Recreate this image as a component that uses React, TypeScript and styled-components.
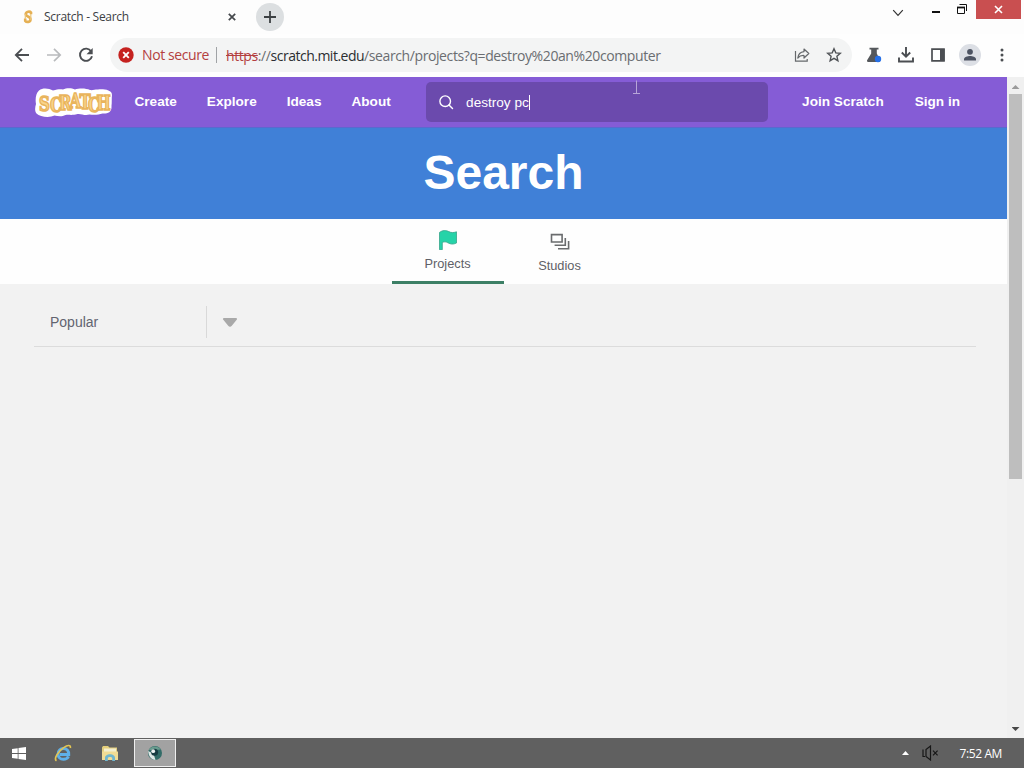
import type { ReactNode } from "react";
import styled, { createGlobalStyle } from "styled-components";

const App = () => {
  return (
    <>
      <GlobalStyle />
      <StyledScreen>
        <TabStrip />
        <Toolbar />
        <StyledViewport>
          <StyledPage>
            <SiteNav />
            <StyledBanner>
              <h1>Search</h1>
            </StyledBanner>
            <StyledTabs>
              <PageTab label="Projects" active>
                <svg width="20" height="20" viewBox="0 0 20 20">
                  <path
                    d="M1.500 2.400C5-.1 8 .2 10.800 1.600c2.500 1.300 4.800 1.200 7.700.2v11.200c-3.400 1.700-6 1.200-8.600-.2-2.300-1.300-3.500-1.100-5.600-.4v7.300H1.500z"
                    fill="#25d3a8"
                    stroke="#36a58a"
                    strokeWidth="0.8"
                    strokeLinejoin="round"
                  />
                </svg>
              </PageTab>
              <PageTab label="Studios">
                <svg width="20" height="20" viewBox="0 0 20 20" fill="none" stroke="#6a6c6e" strokeWidth="1.600">
                  <path d="M1.500 2.600h10.600v7.400H1.500z" />
                  <path d="M15.300 5.900v7.400H4.600M18.600 9.100v7.600H8" />
                </svg>
              </PageTab>
            </StyledTabs>
            <StyledFilter>
              <span>Popular</span>
              <StyledCaret>
                <svg width="16" height="11" viewBox="0 0 16 11">
                  <path d="M2 1h12c1 0 1.400 1 .7 1.800L9.800 8.800c-1 1.200-2.600 1.200-3.600 0L1.300 2.800C.6 2 1 1 2 1z" fill="#a9a9a9" />
                </svg>
              </StyledCaret>
            </StyledFilter>
          </StyledPage>
          <StyledScrollbar>
            <StyledArrow up />
            <StyledThumb />
            <StyledArrow />
          </StyledScrollbar>
        </StyledViewport>
        <Taskbar />
        <StyledPointer width="9" height="14" viewBox="0 0 9 14">
          <path d="M4.500.5v13M1 13.500h7" stroke="#b7a5d8" fill="none" />
        </StyledPointer>
      </StyledScreen>
    </>
  );
};
export default App;

const TabStrip = () => (
  <StyledTabStrip>
    <StyledBrowserTab>
      <svg width="10" height="14" viewBox="0 0 10 14">
        <path
          d="M8 4.300V2.500c-1-1.400-5-1.200-5.300 1.500C2.500 7 7.600 6 7.500 9.500c0 2.800-4 3-5.300 1.400V8.500"
          fill="none"
          stroke="#e5b054"
          strokeWidth="2.600"
        />
        <path d="M7.800 4v6M2.300 9V4" fill="none" stroke="#ecc67c" strokeWidth="1.200" />
      </svg>
      <StyledTabTitle>Scratch - Search</StyledTabTitle>
      <svg width="8" height="8" viewBox="0 0 8 8">
        <path d="M.8.8l6.400 6.400M7.200.8L.8 7.200" stroke="#45484c" strokeWidth="1.700" />
      </svg>
    </StyledBrowserTab>
    <StyledNewTab>
      <svg width="12" height="12" viewBox="0 0 12 12">
        <path d="M6 0v12M0 6h12" stroke="#3c4043" strokeWidth="1.800" />
      </svg>
    </StyledNewTab>
    <StyledWindowButtons>
      <StyledWindowButton w={32} pt={9}>
        <svg width="12" height="8" viewBox="0 0 12 8">
          <path d="M1.200 1.200L6 6.300l4.800-5.100" fill="none" stroke="#333" strokeWidth="1.200" />
        </svg>
      </StyledWindowButton>
      <StyledWindowButton w={44} pt={11}>
        <svg width="8" height="3" viewBox="0 0 8 3">
          <path d="M0 1h8" stroke="#111" strokeWidth="2" />
        </svg>
      </StyledWindowButton>
      <StyledWindowButton w={8} pt={4}>
        <svg width="10" height="11" viewBox="0 0 10 11" fill="none" stroke="#111">
          <path d="M.5 3.500h7v6h-7zM2.500.5h7v6.500" />
          <path d="M0 3.500h8" strokeWidth="1.800" />
        </svg>
      </StyledWindowButton>
      <StyledWindowButton w={45} pt={5} close>
        <svg width="9" height="9" viewBox="0 0 9 9">
          <path d="M1 1l7 7M8 1L1 8" stroke="#fff" strokeWidth="1.600" />
        </svg>
      </StyledWindowButton>
    </StyledWindowButtons>
  </StyledTabStrip>
);

const Toolbar = () => (
  <StyledToolbar>
    <StyledIcon>
      <svg width="16" height="14" viewBox="0 0 16 14" fill="none" stroke="#4b4e52" strokeWidth="1.800">
        <path d="M15 7H2M8 .8L1.800 7 8 13.200" />
      </svg>
    </StyledIcon>
    <StyledIcon>
      <svg width="16" height="14" viewBox="0 0 16 14" fill="none" stroke="#b9bbbd" strokeWidth="1.700">
        <path d="M1 7h13M8 .8L14.200 7 8 13.200" />
      </svg>
    </StyledIcon>
    <StyledIcon>
      <svg width="16" height="16" viewBox="0 0 16 16">
        <path d="M13.200 4.400A6.100 6.100 0 1 0 14 9.300" fill="none" stroke="#4b4e52" strokeWidth="1.900" />
        <path d="M14.700 1v6.200H8.500z" fill="#4b4e52" />
      </svg>
    </StyledIcon>
    <StyledOmnibox>
      <svg width="16" height="16" viewBox="0 0 16 16">
        <circle cx="8" cy="8" r="7.700" fill="#c5221f" />
        <path d="M5.200 5.200l5.600 5.600M10.800 5.200l-5.600 5.600" stroke="#fff" strokeWidth="1.900" />
      </svg>
      <StyledWarning>Not secure</StyledWarning>
      <StyledUrl>
        <s>https</s>://<b>scratch.mit.edu</b>/search/projects?q=destroy%20an%20computer
      </StyledUrl>
      <StyledIcon>
        <svg width="16" height="16" viewBox="0 0 16 16" fill="none" stroke="#65686b" strokeWidth="1.200">
          <path d="M1.500 4v10.200h11.700V12" />
          <path d="M10 2l4.800 4.500L10 11V8.500c-2.800-.2-4.700.7-6.200 2.500C4.200 7.200 6.500 5 10 4.600z" strokeLinejoin="round" />
        </svg>
      </StyledIcon>
      <StyledIcon>
        <svg width="16" height="16" viewBox="0 0 16 16">
          <path
            d="M8 1.800l1.800 4.100 4.500.4-3.400 3 1 4.400L8 11.400l-3.900 2.300 1-4.400-3.400-3 4.500-.4z"
            fill="none"
            stroke="#505357"
            strokeWidth="1.400"
          />
        </svg>
      </StyledIcon>
    </StyledOmnibox>
    <StyledIcon>
      <svg width="16" height="16" viewBox="0 0 16 16">
        <path d="M3.500.8h9v1.800h-1.700v4L14 13.200c.4 1-.1 1.800-1.100 1.800H2.200c-1 0-1.500-.8-1.100-1.700l4.100-6.700v-4H3.500z" fill="#55585c" />
        <circle cx="12" cy="12" r="3.200" fill="#2670e8" />
      </svg>
    </StyledIcon>
    <StyledIcon>
      <svg width="18" height="18" viewBox="0 0 18 18" fill="none" stroke="#4b4e52" strokeWidth="1.900">
        <path d="M9 1v9.500M4.800 6.500L9 10.700l4.200-4.200M2 11.500v4h14v-4" />
      </svg>
    </StyledIcon>
    <StyledIcon>
      <svg width="14" height="14" viewBox="0 0 14 14">
        <path d="M1 1.200h12v11.600H1z" fill="none" stroke="#4b4e52" strokeWidth="1.700" />
        <path d="M9 1h4.500v12H9z" fill="#4b4e52" />
      </svg>
    </StyledIcon>
    <StyledIcon>
      <svg width="22" height="22" viewBox="0 0 22 22">
        <circle cx="11" cy="11" r="11" fill="#dcdfe5" />
        <circle cx="11" cy="7.800" r="2.900" fill="#4c5362" />
        <path d="M5 16.500v-1.400c0-2.200 3.600-3.200 6-3.200s6 1 6 3.200v1.400z" fill="#4c5362" />
      </svg>
    </StyledIcon>
    <StyledIcon>
      <svg width="4" height="14" viewBox="0 0 4 14" fill="#4b4e52">
        <circle cx="2" cy="2" r="1.500" />
        <circle cx="2" cy="7" r="1.500" />
        <circle cx="2" cy="12" r="1.500" />
      </svg>
    </StyledIcon>
  </StyledToolbar>
);

const SiteNav = () => (
  <StyledNav>
    <StyledLogo width="78" height="30" viewBox="0 0 78 30">
      <path
        d="M5 3.500C9 .5 15 1.500 19 3.500c4-.8 6-1.500 10-1 3-1.500 8-2 12 0 4-1.500 11-1.500 15 .5 3 .5 4-.5 8-.5 5-.5 14 0 14 5.500-.5 4 0 7-.5 11 .5 6-4 8-9 7.500-4 1.500-9 1.500-13 1-5 1.500-8-1-12-.5-5 1.500-8 .5-12 1-4 2-8 1-11 .5C15.500 31 6 30 2.500 26.500.5 24 1 20 2 17 1 12 2 6 5 3.500z"
        fill="#fff"
      />
      <text transform="scale(1 1.3)" x="5 16 25 35.500 45.500 54 62.500" y="18.500 19.500 17.500 16.500 17 19 18">
        SCRATCH
      </text>
    </StyledLogo>
    <StyledLinks>
      <a>Create</a>
      <a>Explore</a>
      <a>Ideas</a>
      <a>About</a>
    </StyledLinks>
    <StyledSearch>
      <svg width="16" height="16" viewBox="0 0 16 16" fill="none" stroke="#fff" strokeWidth="1.400">
        <circle cx="7.200" cy="7.200" r="5.300" />
        <path d="M11 11l3.500 3.500" strokeLinecap="round" />
      </svg>
      <span>destroy pc</span>
    </StyledSearch>
    <StyledLinks>
      <a>Join Scratch</a>
      <a>Sign in</a>
    </StyledLinks>
  </StyledNav>
);

type PageTabProps = {
  label: string;
  active?: boolean;
  children: ReactNode;
};
const PageTab = ({ label, active = false, children }: PageTabProps) => (
  <StyledPageTab $active={active}>
    {children}
    <span>{label}</span>
  </StyledPageTab>
);

const Taskbar = () => (
  <StyledTaskbar>
    <StyledTask w={38}>
      <svg width="14" height="13" viewBox="0 0 14 13" fill="#fff">
        <path d="M0 2l5.700-.8v4.900H0zM6.500 1L14 0v6.100H6.500zM0 6.900h5.700v4.900L0 11zM6.500 6.900H14V13l-7.500-1z" />
      </svg>
    </StyledTask>
    <StyledTask w={49}>
      <svg width="18" height="18" viewBox="0 0 18 18">
        <path
          d="M14.500 12.300c-1 2-2.900 3-5.100 3-3.300 0-5.300-2.200-5.300-5.400 0-3.300 2.200-5.400 5.300-5.400 3.600 0 5.400 2.400 5.300 5.900H6"
          fill="none"
          stroke="#5fb0e8"
          strokeWidth="3"
        />
        <path d="M2.500 16.800c-3-1.700 1.500-9.500 7.200-13.200C13.300 1.200 17 .3 16.300 4" fill="none" stroke="#e3c553" strokeWidth="1.700" />
      </svg>
    </StyledTask>
    <StyledTask w={45}>
      <svg width="18" height="17" viewBox="0 0 18 17">
        <path d="M1 2.500L2 1h5l1.500 1.500H16V14H1z" fill="#e3ce7c" />
        <path d="M3 3.500h12v5H3z" fill="#f4efcf" />
        <path d="M1 6.500h16V15H1z" fill="#f1dc94" />
        <path d="M4 16v-3c0-5 10-5 10 0v3h-2.800v-3c0-1.500-4.400-1.500-4.400 0v3z" fill="#70b6cf" />
      </svg>
    </StyledTask>
    <StyledTask w={42} $active>
      <svg width="16" height="16" viewBox="0 0 16 16">
        <circle cx="8" cy="8" r="7" fill="#326c68" />
        <path d="M1.800 5C4 .3 11 .3 13.800 4.500L8 5z" fill="#6a9c8f" />
        <path d="M1.200 6C1.500 12 5 15 8.500 15L6.600 9z" fill="#dfe8e6" />
        <circle cx="7.600" cy="7.300" r="3.500" fill="#173c42" />
        <circle cx="6.200" cy="6.200" r="1.900" fill="#edf4f3" />
      </svg>
    </StyledTask>
    <StyledTray>
      <svg width="7" height="4" viewBox="0 0 7 4">
        <path d="M0 4l3.500-4L7 4z" fill="#fff" />
      </svg>
      <svg width="18" height="16" viewBox="0 0 18 16" fill="none" stroke="#171717" strokeWidth="1.200">
        <path d="M2 4.500v7h2M5 4.500v7L9.500 15V1L5 4.500z" />
        <path d="M12 5.700l4.600 4.600M16.600 5.700L12 10.300" />
      </svg>
      <StyledClock>7:52 AM</StyledClock>
    </StyledTray>
  </StyledTaskbar>
);

const GlobalStyle = createGlobalStyle`
  * {
    box-sizing: border-box;
  }
  body {
    margin: 0;
    overflow: hidden;
    font-family: "Liberation Sans", Arial, sans-serif;
  }
  svg {
    display: block;
    flex: none;
  }
`;

const StyledScreen = styled.div`
  position: relative;
  display: flex;
  flex-direction: column;
  width: 1024px;
  height: 768px;
  background: #fdfdfd;
`;

const StyledTabStrip = styled.div`
  display: flex;
  height: 34px;
  font-family: "Open Sans", "Noto Sans", sans-serif;
`;

const StyledBrowserTab = styled.div`
  display: flex;
  align-items: center;
  width: 256px;
  height: 34px;
  padding: 0 20px 0 23px;
`;

const StyledTabTitle = styled.span`
  flex: 1;
  margin-left: 11px;
  padding-bottom: 1px;
  font-size: 12px;
  letter-spacing: -0.28px;
  color: #3c4043;
`;

const StyledNewTab = styled.div`
  display: flex;
  align-items: center;
  justify-content: center;
  width: 28px;
  height: 28px;
  margin-top: 3px;
  border-radius: 50%;
  background: #dcdfe1;
`;

const StyledWindowButtons = styled.div`
  display: flex;
  align-items: flex-start;
  margin-left: auto;
  padding-right: 3px;
`;

const StyledWindowButton = styled.div.withConfig({
  shouldForwardProp: (prop) => !["w", "pt", "close"].includes(prop),
})<{ w: number; pt: number; close?: boolean }>`
  display: flex;
  justify-content: center;
  width: ${(props) => props.w}px;
  height: 19px;
  padding-top: ${(props) => props.pt}px;
  margin-left: ${(props) => (props.close ? "10px" : "0")};
  background: ${(props) => (props.close ? "#c94f50" : "transparent")};
`;

const StyledToolbar = styled.div`
  display: flex;
  align-items: center;
  height: 43px;
  padding: 0 6px 1px;
  background: #fefefe;
  font-family: "Open Sans", "Noto Sans", sans-serif;
`;

const StyledIcon = styled.div`
  display: flex;
  align-items: center;
  justify-content: center;
  flex: none;
  width: 32px;
  height: 32px;
`;

const StyledOmnibox = styled.div`
  display: flex;
  align-items: center;
  flex: 1;
  height: 34px;
  margin: 0 6px 0 8px;
  padding: 0 2px 0 8px;
  border-radius: 17px;
  background: #f3f4f4;
  font-size: 14px;
`;

const StyledWarning = styled.span`
  width: 75px;
  margin-left: 8px;
  border-right: 1px solid #a0a3a6;
  line-height: 16px;
  letter-spacing: -0.4px;
  white-space: nowrap;
  color: #b3403f;
`;

const StyledUrl = styled.span`
  flex: 1;
  margin-left: 9px;
  letter-spacing: -0.4px;
  white-space: nowrap;
  color: #6a6d71;
  s {
    color: #b3403f;
  }
  b {
    font-weight: 400;
    letter-spacing: -0.5px;
    color: #2b2e31;
  }
`;

const StyledViewport = styled.div`
  display: flex;
  flex: 1;
  min-height: 0;
`;

const StyledPage = styled.div`
  width: 1007px;
  background: #f2f2f2;
`;

const StyledNav = styled.nav`
  display: flex;
  align-items: center;
  height: 51px;
  padding: 0 47px 0 34px;
  border-bottom: 1px solid #5a69cf;
  background: #855cd6;
`;

const StyledLogo = styled.svg`
  text {
    font-family: "DejaVu Serif", serif;
    font-size: 15px;
    font-weight: 700;
    fill: #f9d48a;
    stroke: #e9b45c;
    stroke-width: 1.200px;
  }
`;

const StyledLinks = styled.div`
  display: flex;
  gap: 30px;
  margin-left: 22.5px;
  padding-bottom: 1px;
  font-size: 13.6px;
  font-weight: 700;
  color: #fff;
  white-space: nowrap;
  & + & {
    margin-left: 34px;
  }
`;

const StyledSearch = styled.div`
  display: flex;
  align-items: center;
  width: 342px;
  height: 40px;
  margin: 0 11.5px 0 auto;
  padding-left: 12px;
  border-radius: 5px;
  background: #6b4aad;
  font-size: 13.6px;
  color: #fff;
  & + ${StyledLinks} {
    gap: 31px;
  }
  span {
    margin-left: 12px;
    border-right: 1px solid #fff;
  }
`;

const StyledBanner = styled.div`
  display: flex;
  align-items: center;
  justify-content: center;
  height: 91px;
  padding-bottom: 2px;
  background: #4080d7;
  h1 {
    margin: 0;
    font-size: 48px;
    line-height: 56px;
    color: #fff;
  }
`;

const StyledTabs = styled.div`
  display: flex;
  justify-content: center;
  height: 65px;
  background: #fefefe;
`;

const StyledPageTab = styled.div<{ $active: boolean }>`
  display: flex;
  flex-direction: column;
  align-items: center;
  width: 112px;
  padding-top: ${(props) => (props.$active ? 11 : 13)}px;
  border-bottom: ${(props) => (props.$active ? "3px solid #3c7f65" : "none")};
  font-size: 12.8px;
  line-height: 15px;
  color: #5f6167;
  span {
    margin-top: 6px;
  }
`;

const StyledFilter = styled.div`
  display: flex;
  align-items: center;
  height: 63px;
  margin: 0 31px 0 34px;
  padding: 14px 0 0 16px;
  border-bottom: 1px solid #dcdcdc;
  font-size: 14px;
  color: #626470;
  > span {
    width: 156px;
  }
`;

const StyledCaret = styled.div`
  display: flex;
  align-items: center;
  height: 32px;
  padding-left: 15px;
  border-left: 1px solid #d9d9d9;
`;

const StyledScrollbar = styled.div`
  display: flex;
  flex-direction: column;
  align-items: center;
  width: 17px;
  background: #f0f0f0;
`;

const StyledArrow = styled.div.withConfig({
  shouldForwardProp: (prop) => prop !== "up",
})<{ up?: boolean }>`
  width: 8px;
  height: 4px;
  margin: ${(props) => (props.up ? "8px 0 5px" : "auto 0 7px")};
  background: ${(props) => (props.up ? "#9a9a9a" : "#474747")};
  clip-path: ${(props) => (props.up ? "polygon(50% 0, 100% 100%, 0 100%)" : "polygon(0 0, 100% 0, 50% 100%)")};
`;

const StyledThumb = styled.div`
  width: 13px;
  height: 385px;
  background: #bebebe;
`;

const StyledTaskbar = styled.div`
  display: flex;
  align-items: center;
  height: 30px;
  background: #606060;
`;

const StyledTask = styled.div.withConfig({
  shouldForwardProp: (prop) => prop !== "w",
})<{ w: number; $active?: boolean }>`
  display: flex;
  align-items: center;
  justify-content: center;
  width: ${(props) => props.w}px;
  height: 28px;
  margin-left: ${(props) => (props.$active ? 2 : 0)}px;
  border: ${(props) => (props.$active ? "1px solid #eee" : "none")};
  background: ${(props) => (props.$active ? "#a2a2a2" : "transparent")};
`;

const StyledTray = styled.div`
  display: flex;
  align-items: center;
  margin-left: auto;
  padding-right: 22px;
  svg + svg {
    margin-left: 12px;
  }
`;

const StyledClock = styled.span`
  margin-left: 21px;
  font-family: "Open Sans", "Noto Sans", sans-serif;
  font-size: 12px;
  letter-spacing: -0.4px;
  color: #fff;
`;

const StyledPointer = styled.svg`
  position: absolute;
  left: 632px;
  top: 80px;
`;
